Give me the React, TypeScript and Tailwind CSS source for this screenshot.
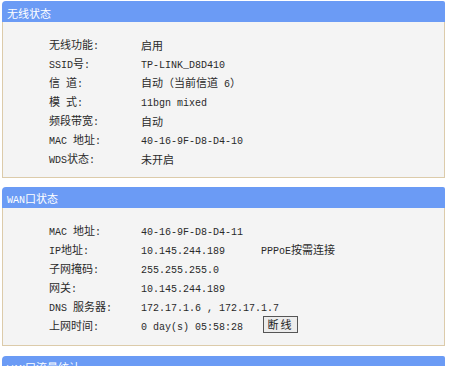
import React from "react";

const isCJK = (ch: string) => /[\u3000-\u9fff\uff00-\uffef]/.test(ch);

function T({ s }: { s: string }) {
  const runs: { cjk: boolean; text: string }[] = [];
  for (const ch of s) {
    const c = isCJK(ch);
    const last = runs[runs.length - 1];
    if (last && last.cjk === c) last.text += ch;
    else runs.push({ cjk: c, text: ch });
  }
  return (
    <>
      {runs.map((r, i) =>
        r.cjk ? (
          <span key={i} className="text-[11px] [font-family:'Noto_Sans_CJK_SC',sans-serif]">
            {r.text}
          </span>
        ) : (
          <span key={i} className="text-[10px] whitespace-pre [font-family:'Liberation_Mono',monospace]">
            {r.text}
          </span>
        )
      )}
    </>
  );
}

function Header({ title }: { title: string }) {
  return (
    <div className="h-[21px] shrink-0 bg-[#6b9bf5] rounded-tl-[4px] rounded-tr-[2px] flex items-center pl-[5px] text-white">
      <span className="leading-none">
        <T s={title} />
      </span>
    </div>
  );
}

function Row({ label, value, extra }: { label: string; value: string; extra?: React.ReactNode }) {
  return (
    <div className="h-[19px] flex items-center text-[#2a2a2a]">
      <div className="w-[92px] pl-[46px] box-content shrink-0 leading-none whitespace-nowrap">
        <T s={label} />
      </div>
      <div className="w-[120px] shrink-0 leading-none whitespace-nowrap">
        <T s={value} />
      </div>
      {extra}
    </div>
  );
}

export default function App() {
  return (
    <div className="w-[449px] h-[366px] overflow-hidden bg-white pl-[2px] pr-[4px] pt-[1px] flex flex-col">
      <Header title="无线状态" />
      <div className="h-[156px] shrink-0 bg-[#f4f4f4] border border-t-0 border-[#dccbaa] pt-[12px] flex flex-col">
        <Row label="无线功能:" value="启用" />
        <Row label="SSID号:" value="TP-LINK_D8D410" />
        <Row label="信 道:" value="自动（当前信道 6）" />
        <Row label="模 式:" value="11bgn mixed" />
        <Row label="频段带宽:" value="自动" />
        <Row label="MAC 地址:" value="40-16-9F-D8-D4-10" />
        <Row label="WDS状态:" value="未开启" />
      </div>
      <div className="h-[9px] shrink-0" />
      <Header title="WAN口状态" />
      <div className="h-[138px] shrink-0 bg-[#f4f4f4] border border-t-0 border-[#dccbaa] pt-[12px] flex flex-col">
        <Row label="MAC 地址:" value="40-16-9F-D8-D4-11" />
        <Row
          label="IP地址:"
          value="10.145.244.189"
          extra={
            <div className="leading-none whitespace-nowrap text-[#2a2a2a]">
              <T s="PPPoE按需连接" />
            </div>
          }
        />
        <Row label="子网掩码:" value="255.255.255.0" />
        <Row label="网关:" value="10.145.244.189" />
        <Row label="DNS 服务器:" value="172.17.1.6 , 172.17.1.7" />
        <Row
          label="上网时间:"
          value="0 day(s) 05:58:28"
          extra={
            <div className="ml-[2px] w-[35px] h-[17px] border border-[#555] bg-[#ececec] flex items-center justify-center leading-none tracking-[2px] text-[#222]">
              <T s="断线" />
            </div>
          }
        />
      </div>
      <div className="h-[10px] shrink-0" />
      <Header title="WAN口流量统计" />
    </div>
  );
}
